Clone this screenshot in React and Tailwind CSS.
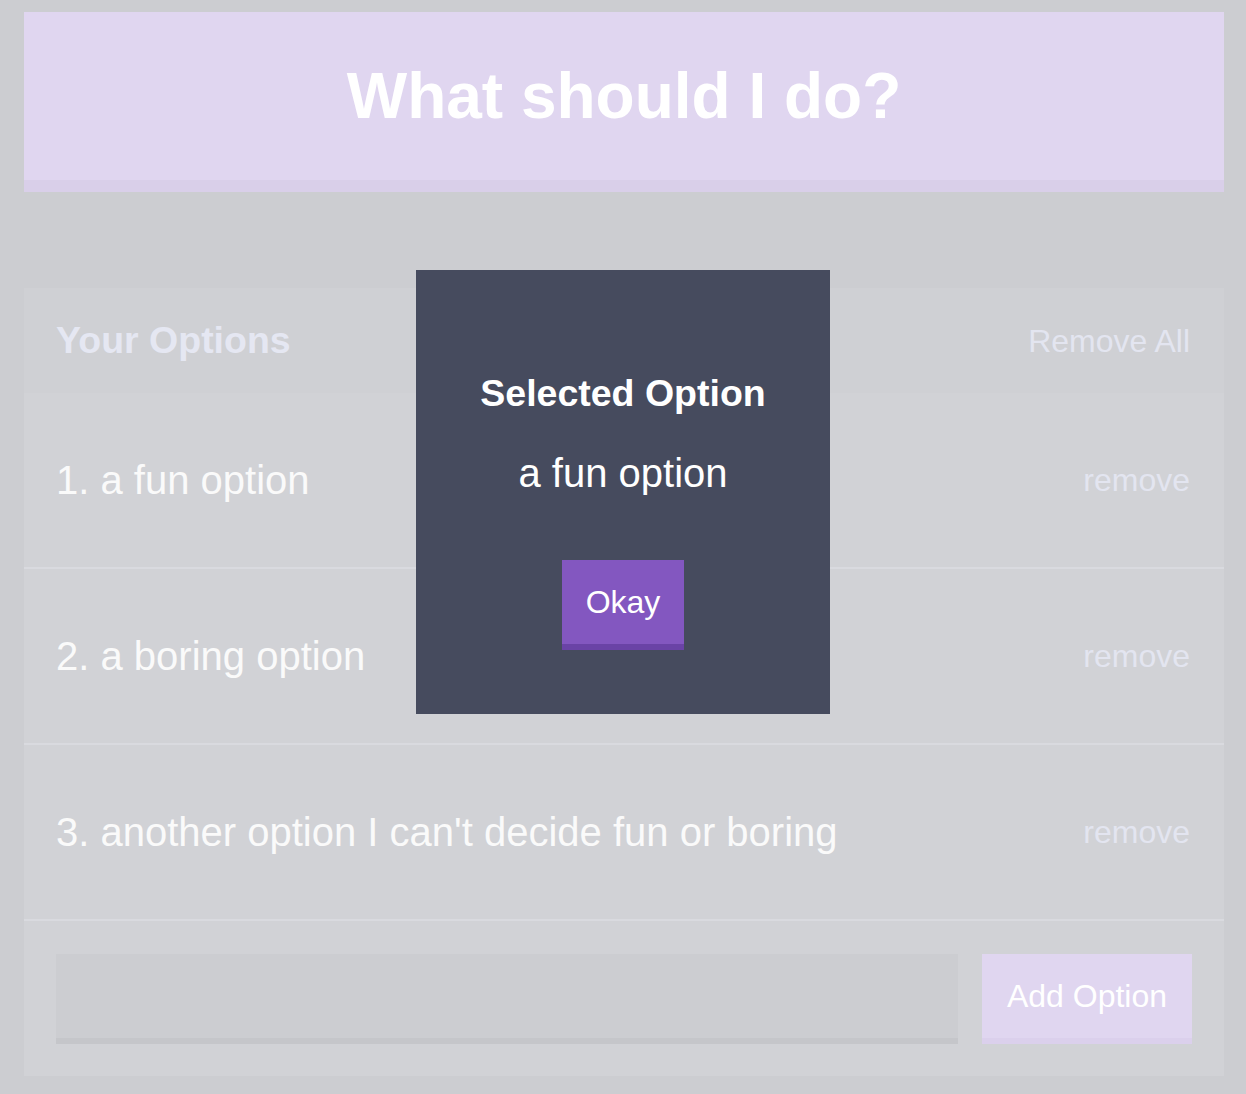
import React from "react";

const font = { fontFamily: '"Liberation Sans", Arial, Helvetica, sans-serif' };

export default function App() {
  const options = [
    "a fun option",
    "a boring option",
    "another option I can't decide fun or boring",
  ];
  return (
    <div className="relative min-h-[1094px] w-full bg-[#cccdd1] pt-[12px] pb-[18px]" style={font}>
      <div className="ml-[24px] flex h-[180px] w-[1200px] items-center justify-center border-b-[12px] border-[#d9cfe9] bg-[#e0d6f0]">
        <h1 className="text-[64px] font-bold leading-none text-white">What should I do?</h1>
      </div>

      <div className="ml-[24px] mt-[96px] w-[1200px] bg-[#d1d2d6]">
        <div className="flex h-[105px] items-center justify-between bg-[#cfd0d4] pl-[32px] pr-[34px]">
          <h3 className="text-[37.5px] font-bold text-[#e5e7f2]">Your Options</h3>
          <button className="text-[32px] text-[#e3e5f0]">Remove All</button>
        </div>
        {options.map((o, i) => (
          <div
            key={i}
            className="flex h-[176px] items-center justify-between border-b-2 border-[#d9dadf] pl-[32px] pr-[34px]"
          >
            <p className="text-[40px] text-[#fafafa]">
              {i + 1}. {o}
            </p>
            <button className="text-[32px] text-[#e3e5f0]">remove</button>
          </div>
        ))}
        <div className="flex gap-[24px] px-[32px] pt-[33px] pb-[32px]">
          <input
            className="h-[90px] flex-1 border-b-[6px] border-[#c5c6ca] bg-[#cccdd1] outline-none"
            type="text"
          />
          <button className="h-[90px] w-[210px] border-b-[6px] border-[#dbd0ec] bg-[#e0d6f0] text-[32px] text-white">
            Add Option
          </button>
        </div>
      </div>

      <div className="absolute left-[416px] top-[270px] flex h-[444px] w-[414px] flex-col items-center bg-[#464b5e]">
        <h3 className="mt-[103px] text-[37.5px] font-bold leading-[40px] text-white">Selected Option</h3>
        <p className="mt-[40px] text-[40px] leading-[40px] text-white">a fun option</p>
        <button className="mt-[67px] h-[90px] w-[122px] border-b-[6px] border-[#6a43a6] bg-[#8357c0] text-[32px] text-white">
          Okay
        </button>
      </div>
    </div>
  );
}
